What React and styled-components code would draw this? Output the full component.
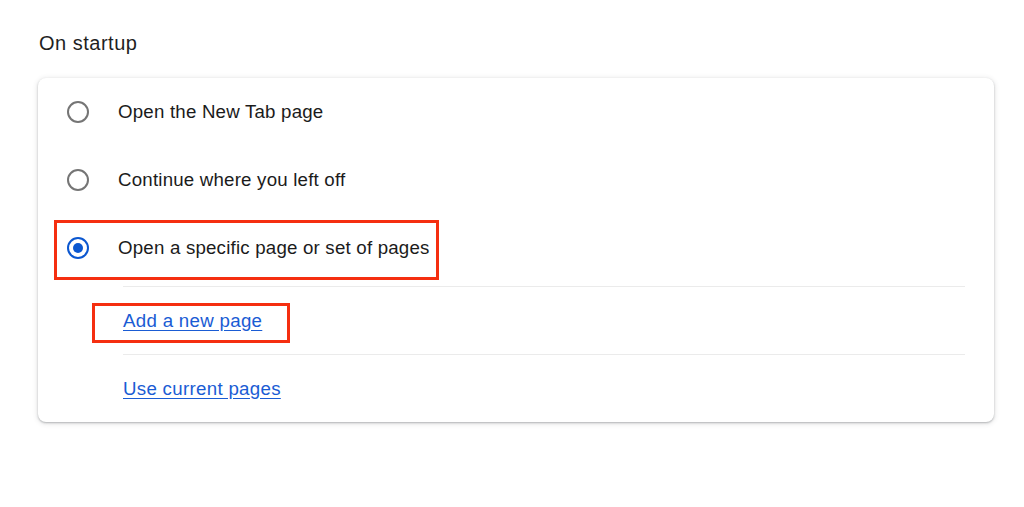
import React from 'react';
import styled, { createGlobalStyle } from 'styled-components';

const GlobalStyle = createGlobalStyle`
  html, body {
    margin: 0;
    padding: 0;
    background: #ffffff;
  }
  body {
    font-family: 'Liberation Sans', Arial, sans-serif;
    color: #1f1f1f;
  }
`;

const Page = styled.div`
  width: 1024px;
  height: 507px;
  padding: 32px 30px 0 38px;
  box-sizing: border-box;
`;

const Heading = styled.h2`
  margin: 0 0 24px 1px;
  font-size: 20px;
  font-weight: 400;
  line-height: 22px;
  letter-spacing: 0.5px;
  color: #1f1f1f;
`;

const Card = styled.div`
  width: 956px;
  background: #fff;
  border-radius: 8px;
  box-shadow: 0 1px 2px rgba(60, 64, 67, 0.32), 0 1px 5px 1px rgba(60, 64, 67, 0.13);
`;

const OptionGroup = styled.div`
  padding-bottom: 4px;
`;

const OptionRow = styled.div`
  height: 68px;
  display: flex;
  align-items: center;
  padding-left: 29px;
`;

const Highlight = styled.div`
  display: inline-flex;
  align-items: center;
  box-sizing: border-box;
  height: ${p => p.$h}px;
  margin: ${p => p.$dy * 2}px 0 0 ${p => -p.$left}px;
  padding: 0 ${p => p.$right}px ${p => p.$dy * 2}px ${p => p.$left - 3}px;
  border: ${p => (p.$on ? '3px solid #f52f10' : '3px solid transparent')};
`;

const Radio = styled.span`
  width: 22px;
  height: 22px;
  box-sizing: border-box;
  border-radius: 50%;
  border: 2.5px solid ${p => (p.$checked ? '#0b57d0' : '#757575')};
  display: inline-flex;
  align-items: center;
  justify-content: center;
  flex-shrink: 0;

  &::after {
    content: '';
    width: 10px;
    height: 10px;
    border-radius: 50%;
    background: ${p => (p.$checked ? '#0b57d0' : 'transparent')};
  }
`;

const Label = styled.span`
  margin-left: 29px;
  font-size: 18.7px;
  letter-spacing: 0.2px;
  color: #1b1b1b;
`;

const LinkRow = styled.div`
  height: 68px;
  margin: 0 29px 0 85px;
  border-top: 1px solid #ebebeb;
  box-sizing: border-box;
  display: flex;
  align-items: center;
`;

const Link = styled.a`
  font-size: 18.7px;
  letter-spacing: 0.3px;
  color: #1a5cd4;
  text-decoration: underline;
  text-underline-offset: 3px;
  cursor: pointer;
`;

const options = [
  { label: 'Open the New Tab page', checked: false, marked: false },
  { label: 'Continue where you left off', checked: false, marked: false },
  { label: 'Open a specific page or set of pages', checked: true, marked: true },
];

const links = [
  { label: 'Add a new page', marked: true },
  { label: 'Use current pages', marked: false },
];

export default function App() {
  return (
    <>
      <GlobalStyle />
      <Page>
        <Heading>On startup</Heading>
        <Card>
          <OptionGroup>
            {options.map(o => (
              <OptionRow key={o.label}>
                <Highlight $on={o.marked} $h={60} $left={13} $right={6} $dy={o.marked ? 2 : 0}>
                  <Radio $checked={o.checked} />
                  <Label>{o.label}</Label>
                </Highlight>
              </OptionRow>
            ))}
          </OptionGroup>
          {links.map(l => (
            <LinkRow key={l.label}>
              <Highlight $on={l.marked} $h={40} $left={31} $right={25} $dy={l.marked ? 2 : 0}>
                <Link>{l.label}</Link>
              </Highlight>
            </LinkRow>
          ))}
        </Card>
      </Page>
    </>
  );
}
